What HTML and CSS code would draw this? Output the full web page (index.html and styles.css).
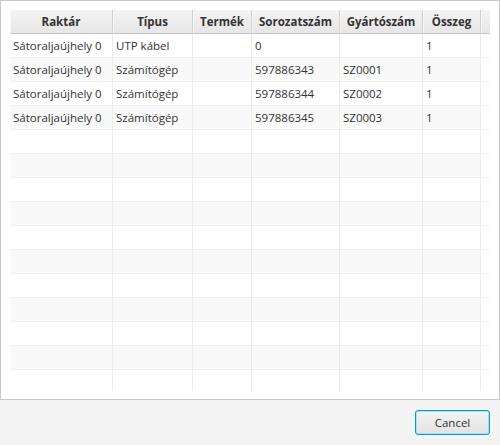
FILE: index.html
```html
<!DOCTYPE html>
<html>
<head>
<meta charset="utf-8">
<link rel="stylesheet" href="styles.css">
</head>
<body>
<div class="dialog">
  <div class="table-box">
    <div class="table">
      <div class="row head">
        <div class="hc">Raktár</div>
        <div class="hc">Típus</div>
        <div class="hc">Termék</div>
        <div class="hc">Sorozatszám</div>
        <div class="hc">Gyártószám</div>
        <div class="hc">Összeg</div>
        <div class="hc filler"></div>
      </div>
      <div class="body">
        <div class="row">
          <div class="c">Sátoraljaújhely 0</div><div class="c">UTP kábel</div><div class="c"></div><div class="c">0</div><div class="c"></div><div class="c">1</div><div class="f"></div>
        </div>
        <div class="row odd">
          <div class="c">Sátoraljaújhely 0</div><div class="c">Számítógép</div><div class="c"></div><div class="c">597886343</div><div class="c">SZ0001</div><div class="c">1</div><div class="f"></div>
        </div>
        <div class="row">
          <div class="c">Sátoraljaújhely 0</div><div class="c">Számítógép</div><div class="c"></div><div class="c">597886344</div><div class="c">SZ0002</div><div class="c">1</div><div class="f"></div>
        </div>
        <div class="row odd">
          <div class="c">Sátoraljaújhely 0</div><div class="c">Számítógép</div><div class="c"></div><div class="c">597886345</div><div class="c">SZ0003</div><div class="c">1</div><div class="f"></div>
        </div>
        <div class="row"><div class="c"></div><div class="c"></div><div class="c"></div><div class="c"></div><div class="c"></div><div class="c"></div><div class="f"></div></div>
        <div class="row odd"><div class="c"></div><div class="c"></div><div class="c"></div><div class="c"></div><div class="c"></div><div class="c"></div><div class="f"></div></div>
        <div class="row"><div class="c"></div><div class="c"></div><div class="c"></div><div class="c"></div><div class="c"></div><div class="c"></div><div class="f"></div></div>
        <div class="row odd"><div class="c"></div><div class="c"></div><div class="c"></div><div class="c"></div><div class="c"></div><div class="c"></div><div class="f"></div></div>
        <div class="row"><div class="c"></div><div class="c"></div><div class="c"></div><div class="c"></div><div class="c"></div><div class="c"></div><div class="f"></div></div>
        <div class="row odd"><div class="c"></div><div class="c"></div><div class="c"></div><div class="c"></div><div class="c"></div><div class="c"></div><div class="f"></div></div>
        <div class="row"><div class="c"></div><div class="c"></div><div class="c"></div><div class="c"></div><div class="c"></div><div class="c"></div><div class="f"></div></div>
        <div class="row odd"><div class="c"></div><div class="c"></div><div class="c"></div><div class="c"></div><div class="c"></div><div class="c"></div><div class="f"></div></div>
        <div class="row"><div class="c"></div><div class="c"></div><div class="c"></div><div class="c"></div><div class="c"></div><div class="c"></div><div class="f"></div></div>
        <div class="row odd"><div class="c"></div><div class="c"></div><div class="c"></div><div class="c"></div><div class="c"></div><div class="c"></div><div class="f"></div></div>
        <div class="row"><div class="c"></div><div class="c"></div><div class="c"></div><div class="c"></div><div class="c"></div><div class="c"></div><div class="f"></div></div>
      </div>
    </div>
  </div>
  <div class="footer">
    <button class="btn">Cancel</button>
  </div>
</div>
</body>
</html>
```

FILE: styles.css
```css
* { box-sizing: border-box; }
html, body {
  margin: 0;
  padding: 0;
  width: 500px;
  height: 445px;
  background: #f4f4f4;
  font-family: "Open Sans", "Noto Sans", sans-serif;
  font-size: 11.5px;
  color: #333333;
  overflow: hidden;
}
.dialog {
  display: flex;
  flex-direction: column;
  width: 500px;
  height: 445px;
}
.table-box {
  width: 500px;
  height: 400px;
  border: 1px solid #c8c8c8;
  background: #ffffff;
  padding: 9px;
}
.table {
  width: 480px;
  height: 380px;
  display: flex;
  flex-direction: column;
}
.row {
  display: grid;
  grid-template-columns: 103px 80px 59px 88px 83px 58px 9px;
  height: 24px;
  flex: none;
}
.head {
  border-bottom: 1px solid #c5c5c5;
  background: linear-gradient(to bottom, #f4f4f4 0%, #e6e6e6 100%);
}
.hc {
  height: 23px;
  line-height: 23px;
  text-align: center;
  font-weight: bold;
  color: #333333;
  border-right: 1px solid #cfcfcf;
  box-shadow: inset 1px 0 0 #f8f8f8;
  white-space: nowrap;
  overflow: hidden;
}
.hc.filler { border-right: none; }
.body {
  flex: 1;
  overflow: hidden;
  display: flex;
  flex-direction: column;
}
.body .row {
  background: #ffffff;
  border-bottom: 1px solid #f0f0f0;
}
.body .row.odd { background: #f9f9f9; }
.c {
  height: 23px;
  line-height: 23px;
  padding-left: 3px;
  border-right: 1px solid #ececec;
  white-space: nowrap;
  overflow: hidden;
}
.f { background: #ffffff; }
.footer {
  flex: 1;
  display: flex;
  justify-content: flex-end;
  align-items: flex-start;
  padding: 10px 10px 0 0;
}
.btn {
  width: 75px;
  height: 25px;
  border: 1px solid #039ed3;
  border-radius: 3px;
  background: linear-gradient(to bottom, #f4f4f4 0%, #e2e2e2 100%);
  box-shadow: inset 0 0 0 1px #b0dcef;
  font-family: "Open Sans", "Noto Sans", sans-serif;
  font-size: 11.5px;
  color: #333333;
  padding: 0;
}
```
